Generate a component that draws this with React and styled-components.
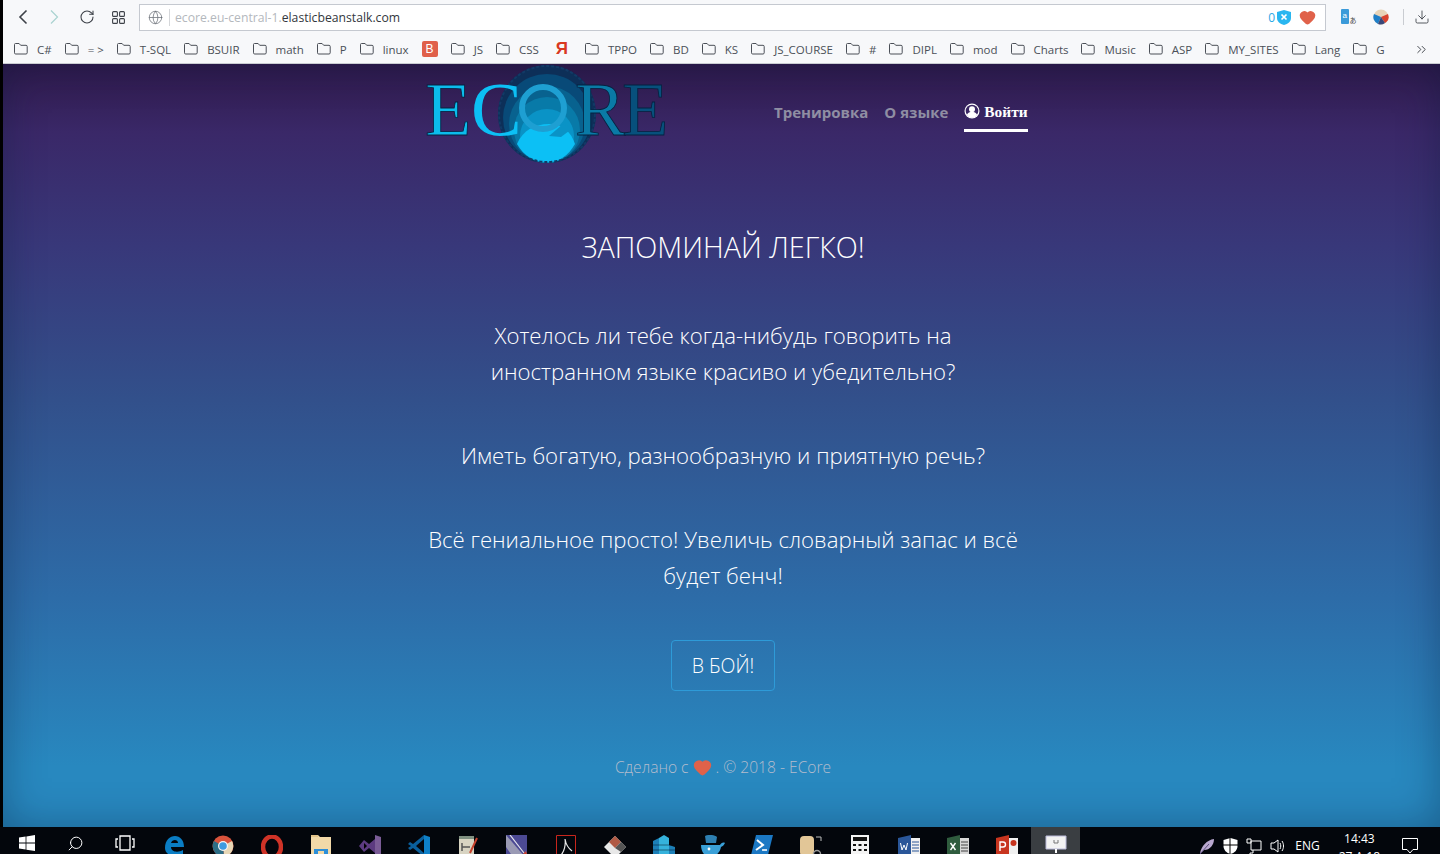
import React from 'react';
import styled, { createGlobalStyle } from 'styled-components';
import { RotateCw, Globe, Download, ChevronsRight, Search, Heart } from 'lucide-react';

const GlobalStyle = createGlobalStyle`
  html, body {
    margin: 0;
    padding: 0;
    height: 854px;
    overflow: hidden;
    background: #000;
  }
`;

const bookmarks = [
  'C#', '= >', 'T-SQL', 'BSUIR', 'math', 'P', 'linux', '@b', 'JS', 'CSS', '@y', 'TPPO', 'BD', 'KS',
  'JS_COURSE', '#', 'DIPL', 'mod', 'Charts', 'Music', 'ASP', 'MY_SITES', 'Lang', 'G',
];

const FolderIcon = () => (
  <svg width="14" height="12" viewBox="0 0 14 12" fill="none" stroke="#4a4f57" strokeWidth="1">
    <path d="M1.5 .5h3.6l1.6 1.8h5.3a1.2 1.2 0 0 1 1.2 1.2v6.3a1.2 1.2 0 0 1-1.2 1.2H1.7A1.2 1.2 0 0 1 .5 9.8V1.5a1 1 0 0 1 1-1z" />
  </svg>
);

const Logo = () => (
  <svg width="242" height="100" viewBox="0 0 242 100">
    <circle cx="122" cy="50" r="49" fill="#0d2f58" />
    <circle cx="122" cy="54" r="44" fill="#084a78" />
    <circle cx="122" cy="60" r="38" fill="#08628f" />
    <circle cx="122" cy="66" r="33" fill="#087aa8" />
    <circle cx="122" cy="72" r="27" fill="#0a93c6" />
    <path d="M92 80c6-14 18-20 32-20 14 0 22 8 26 20-7 12-16 18-28 18-13 0-23-6-30-18z" fill="#0cc0f5" />
    <circle cx="122" cy="50" r="48" fill="none" stroke="#123a66" strokeWidth="2" strokeDasharray="3 2" />
    <circle cx="118" cy="44" r="21" fill="none" stroke="#1e9fd2" strokeWidth="6" />
    <path d="M124 72l14-12 10 4-12 9z" fill="#0a93c6" />
    <g fontFamily="'Liberation Serif', serif" fontSize="76" stroke="#04213f" strokeWidth=".8">
      <text x="0" y="71" fill="#0cbcec">E</text>
      <text x="46" y="71" fill="#0cc0f5" stroke="none">C</text>
      <text x="150" y="71" fill="#0a7aa6">R</text>
      <text x="197" y="71" fill="#07507c">E</text>
    </g>
  </svg>
);

const taskIcons = [
  <svg key="win" width="16" height="16" viewBox="0 0 16 16" fill="#fff"><path d="M0 2.4 6.6 1.5v6H0zM7.4 1.4 16 0v7.5H7.4zM0 8.4h6.6v6L0 13.5zM7.4 8.4H16V16l-8.6-1.3z" /></svg>,
  <Search key="search" size={17} color="#fff" strokeWidth={1.4} style={{ transform: 'scaleX(-1)' }} />,
  <svg key="view" width="20" height="18" viewBox="0 0 20 18" fill="none" stroke="#fff" strokeWidth="1.3"><path d="M5 1h10v14H5zM3 4H1v8h2M17 4h2v8h-2" /></svg>,
  <svg key="edge" width="20" height="22" viewBox="0 0 20 22"><path d="M1 13C1 5 6 1 11 1c5 0 9 4 9 11H7c0 5 7 6 12 3v5c-7 3-18 1-18-7zM7 8h7c0-4-6-4-7 0z" fill="#0a7dc4" /></svg>,
  <svg key="chrome" width="22" height="22" viewBox="0 0 22 22"><circle cx="11" cy="11" r="10.5" fill="#d9533c" /><path d="M11 11 20 6a10.5 10.5 0 0 1-8 15.5z" fill="#e7d7b6" /><path d="M11 11 12 21.5A10.5 10.5 0 0 1 2 6z" fill="#2d6e86" /><circle cx="11" cy="11" r="5" fill="#f5f5f5" /><circle cx="11" cy="11" r="3.8" fill="#3d9be0" /></svg>,
  <svg key="opera" width="22" height="24" viewBox="0 0 22 24"><ellipse cx="11" cy="12" rx="9" ry="10.5" fill="none" stroke="#cf3327" strokeWidth="4.5" /></svg>,
  <svg key="files" width="20" height="22" viewBox="0 0 20 22"><path d="M0 0h7l2 2h11v20H0z" fill="#f2d9a8" /><path d="M0 0h7v2H0z" fill="#e3c48a" /><path d="M3 14h14v8H3z" fill="#2d8fd8" /><path d="M7 16h6v6H7z" fill="#f2d9a8" /></svg>,
  <svg key="vs" width="22" height="22" viewBox="0 0 22 22"><path d="M16 0l6 2v18l-6 2z" fill="#7a5c96" /><path d="M16 4v14l-6-5-5 4-5-6 5-6 5 4z" fill="#5c3b80" /><path d="M5 8v6l3-3z" fill="#000" /></svg>,
  <svg key="code" width="22" height="22" viewBox="0 0 22 22"><path d="M16 0l6 2v18l-6 2z" fill="#0e80c8" /><path d="M16 4 8 11l8 7v4L5 13l-3 2-2-2 3-2-3-2 2-2 3 2L16 0z" fill="#0a5f9c" /></svg>,
  <svg key="note" width="22" height="22" viewBox="0 0 22 22"><path d="M2 1h15v21H2z" fill="#d8d4c2" /><path d="M2 1h15v3H2z" fill="#7f8f80" /><path d="M5 12h8M5 8v8" stroke="#555" strokeWidth="1.5" /><path d="M13 18 20 3" stroke="#c8432e" strokeWidth="2" /></svg>,
  <svg key="vpn" width="24" height="22" viewBox="0 0 24 22"><path d="M1 0h21v22H1z" fill="#4c4a94" /><path d="M1 0 20 22H8L1 12z" fill="#9a9ab4" /><path d="M5 0l14 18" stroke="#e8e8ee" strokeWidth="1.2" /><path d="M15 22l6-6 2 6z" fill="#c8432e" /></svg>,
  <svg key="pdf" width="20" height="22" viewBox="0 0 20 22" fill="none"><path d="M.5.5h19v22H.5z" stroke="#c8251c" /><path d="M5 20c3-3 5-10 4-16 1 6 3 9 7 12" stroke="#e8e8e8" strokeWidth="1.2" /></svg>,
  <svg key="git" width="24" height="24" viewBox="0 0 24 24"><path d="M12 1 23 12 12 23 1 12z" fill="#e8e8e8" /><path d="M12 1l6 6-6 6-6-6z" fill="#b05a45" /><path d="M12 13l6-6 5 5-5 5z" fill="#555" /></svg>,
  <svg key="stack" width="22" height="24" viewBox="0 0 22 24"><path d="M0 6l6-3v21H0z" fill="#1c7fb8" /><path d="M6 3l5-3 5 3v21H6z" fill="#35b2dc" /><path d="M16 10l6 2v12h-6z" fill="#1c7fb8" /><path d="M0 10h22M0 15h22M0 20h22" stroke="#05121d" strokeWidth=".8" opacity=".6" /></svg>,
  <svg key="docker" width="24" height="22" viewBox="0 0 24 22"><path d="M0 10h19c1-2 3-3 5-2-1 2-2 3-4 4-1 6-6 10-11 10C4 22 0 17 0 10z" fill="#3aa0d8" /><path d="M4 1c4-2 10-1 12 1l-1 6H5z" fill="#2d7fb2" /><circle cx="8" cy="14" r="1.4" fill="#fff" /></svg>,
  <svg key="shell" width="22" height="20" viewBox="0 0 22 20"><path d="M5 0h17l-5 20H0z" fill="#1b78c4" /><path d="M6 5l6 5-7 5" stroke="#fff" strokeWidth="2" fill="none" /><path d="M11 15h5" stroke="#fff" strokeWidth="1.6" /></svg>,
  <svg key="sql" width="24" height="24" viewBox="0 0 24 24"><rect x="1" y="1" width="14" height="20" rx="4" fill="#e2c697" /><path d="M17 2h5v4" stroke="#bbb" fill="none" /><circle cx="18" cy="19" r="3.5" fill="none" stroke="#999" strokeWidth="1.4" /></svg>,
  <svg key="calc" width="18" height="22" viewBox="0 0 18 22"><path d="M0 0h18v22H0z" fill="#f4f4f4" /><path d="M2 2h14v4H2z" fill="#111" /><path d="M2 9h3v2H2zM7.500 9h3v2h-3zM13 9h3v2h-3zM2 14h3v2H2zM7.500 14h3v2h-3zM13 14h3v2h-3zM2 19h3v2H2zM7.500 19h3v2h-3zM13 19h3v2h-3z" fill="#111" /></svg>,
  <svg key="word" width="22" height="22" viewBox="0 0 22 22"><path d="M0 3 13 0v22L0 19z" fill="#2a5699" /><path d="M13 3h9v17h-9z" fill="#f0f0f0" /><path d="M14 7h7M14 10h7M14 13h7M14 16h7" stroke="#2a5699" /><path d="M2.500 8l1.500 7 2-5 2 5 1.500-7" stroke="#fff" fill="none" /></svg>,
  <svg key="excel" width="22" height="22" viewBox="0 0 22 22"><path d="M0 3 13 0v22L0 19z" fill="#2f5c3e" /><path d="M13 3h9v17h-9z" fill="#d8d8d8" /><path d="M14 7h7M14 10h7M14 13h7M14 16h7" stroke="#444" /><path d="M3.500 8l5 7M8.500 8l-5 7" stroke="#fff" strokeWidth="1.4" /></svg>,
  <svg key="ppt" width="22" height="22" viewBox="0 0 22 22"><path d="M0 3 13 0v22L0 19z" fill="#c8351f" /><path d="M13 3h9v17h-9z" fill="#f0f0f0" /><circle cx="17.500" cy="8" r="3" fill="#c8351f" /><path d="M4 16V7h3a2.500 2.500 0 0 1 0 5H4" stroke="#fff" strokeWidth="1.4" fill="none" /></svg>,
  <svg key="screen" width="22" height="20" viewBox="0 0 22 20" fill="none"><path d="M1 1h20v13H1z" fill="#f2f2f2" stroke="#b9b9d8" /><path d="M9 5v3h4V5" stroke="#777" /><path d="M11 14v4" stroke="#fff" strokeWidth="2" /></svg>,
];

export default function App() {
  return (
    <>
      <GlobalStyle />
      <Screen>
        <Browser>
          <Toolbar>
            <NavIcons>
              <svg width="12" height="16" viewBox="0 0 12 16" fill="none" stroke="#3d4148" strokeWidth="1.6"><path d="M9.500 1.500 3 8l6.500 6.500" /></svg>
              <svg width="12" height="16" viewBox="0 0 12 16" fill="none" stroke="#a9d3d0" strokeWidth="1.2"><path d="M3 1.500 9.500 8 3 14.500" /></svg>
              <RotateCw size={16} color="#3d4148" strokeWidth={1.6} />
              <GridIcon width="13" height="13" viewBox="0 0 13 13" fill="none" stroke="#3d4148" strokeWidth="1.1"><rect x=".6" y=".6" width="4.800" height="4.800" rx="1" /><rect x="7.600" y=".6" width="4.800" height="4.800" rx="1" /><rect x=".6" y="7.600" width="4.800" height="4.800" rx="1" /><rect x="7.600" y="7.600" width="4.800" height="4.800" rx="1" /></GridIcon>
            </NavIcons>
            <AddressBar>
              <Globe size={15} color="#6b7078" strokeWidth={1.2} />
              <AddressDivider />
              <Url><UrlMuted>ecore.eu-central-1.</UrlMuted>elasticbeanstalk.com</Url>
              <ShieldCount>0</ShieldCount>
              <ShieldIcon width="14" height="15" viewBox="0 0 14 15"><path d="M7 0l7 2v6c0 3.500-3 6-7 7-4-1-7-3.500-7-7V2z" fill="#29b6f0" /><path d="M4.500 4.500l5 5M9.500 4.500l-5 5" stroke="#fff" strokeWidth="1.700" /></ShieldIcon>
              <Heart size={17} color="#e0624a" fill="#e0624a" />
            </AddressBar>
            <Extensions>
              <svg width="16" height="16" viewBox="0 0 16 16"><rect width="8" height="15" rx="1" fill="#3a9ad9" /><text x="1.500" y="9" fontFamily="'Liberation Sans', sans-serif" fontSize="8" fill="#fff">a</text><text x="8.500" y="14" fontFamily="'Noto Sans CJK JP', sans-serif" fontSize="7" fill="#444">あ</text></svg>
              <svg width="16" height="16" viewBox="0 0 16 16"><circle cx="8" cy="8" r="7.500" fill="#e8d4b8" /><path d="M8 8l7-3a7.500 7.500 0 0 1-3 9z" fill="#d8422e" /><path d="M8 8l-3 7A7.500 7.500 0 0 1 1 5z" fill="#1f7fc8" /><path d="M8 8l4 6a7.500 7.500 0 0 1-7 1z" fill="#38487a" /></svg>
              <ExtDivider />
              <Download size={16} color="#3d4148" strokeWidth={1.3} />
            </Extensions>
          </Toolbar>
          <BookmarkBar>
            {bookmarks.map((name) => {
              if (name === '@b') return <BadgeB key={name}>B</BadgeB>;
              if (name === '@y') return <YandexMark key={name}>Я</YandexMark>;
              return (
                <Bookmark key={name}>
                  <FolderIcon />
                  <span>{name}</span>
                </Bookmark>
              );
            })}
            <More><ChevronsRight size={15} color="#3d4148" strokeWidth={1.5} /></More>
          </BookmarkBar>
        </Browser>
        <Page>
          <Header>
            <Logo />
            <Nav>
              <NavLink>Тренировка</NavLink>
              <NavLink>О языке</NavLink>
              <LoginLink>
                <svg width="16" height="16" viewBox="0 0 16 16"><circle cx="8" cy="8" r="7.500" fill="#fff" /><circle cx="8" cy="8" r="6.300" fill="#3a2764" /><circle cx="8" cy="6.300" r="3" fill="#fff" /><path d="M2.800 12c1-2.500 3-3 5.200-3s4.200.5 5.200 3a6.300 6.300 0 0 1-10.400 0z" fill="#fff" /></svg>
                Войти
              </LoginLink>
            </Nav>
          </Header>
          <Main>
            <Title>ЗАПОМИНАЙ ЛЕГКО!</Title>
            <Lead>Хотелось ли тебе когда-нибудь говорить на<br />иностранном языке красиво и убедительно?</Lead>
            <Lead>Иметь богатую, разнообразную и приятную речь?</Lead>
            <Lead>Всё гениальное просто! Увеличь словарный запас и всё<br />будет бенч!</Lead>
            <FightButton>В БОЙ!</FightButton>
            <Footer>Сделано с <Heart size={19} color="#e0624a" fill="#e0624a" /> . © 2018 - ECore</Footer>
          </Main>
        </Page>
      </Screen>
      <Taskbar>
        <TaskIcons>
          {taskIcons.map((icon, i) => (
            <TaskCell key={icon.key} $active={i === taskIcons.length - 1}>{icon}</TaskCell>
          ))}
        </TaskIcons>
        <Tray>
          <svg width="16" height="16" viewBox="0 0 16 16"><path d="M1 16C2 8 8 2 15 1c0 6-4 11-10 11z" fill="#b9a8d0" /><path d="M1 16 10 6" stroke="#5a4a78" /></svg>
          <svg width="15" height="16" viewBox="0 0 15 16"><path d="M7.500 0l7 2v6c0 4-3 7-7 8-4-1-7-4-7-8V2z" fill="#fff" /><path d="M7 0v16M0 7h15" stroke="#000" /></svg>
          <svg width="16" height="16" viewBox="0 0 16 16" fill="none" stroke="#fff"><path d="M1 1h4v4H1zM5 3h10v9H5zM7 12v3H4v1" /></svg>
          <svg width="16" height="16" viewBox="0 0 16 16" fill="none" stroke="#fff"><path d="M1 5h3l4-3v12l-4-3H1zM10 5c1 2 1 4 0 6M12 3c2 3 2 7 0 10" /></svg>
          <TrayLang>ENG</TrayLang>
          <Clock>14:43<br />27 А 18</Clock>
          <svg width="16" height="16" viewBox="0 0 16 16" fill="none" stroke="#fff"><path d="M.5.500h15v11H11L8 15l-3-3.500H.5z" /></svg>
        </Tray>
      </Taskbar>
    </>
  );
}

const Screen = styled.div`
  height: 827px;
  border-left: 3px solid #000;
  display: flex;
  flex-direction: column;
`;

const Browser = styled.div`
  height: 64px;
  flex: none;
  box-sizing: border-box;
  background: #f7f8fa;
  border-bottom: 1px solid #c9ccd1;
  font-family: 'Open Sans', sans-serif;
`;

const Toolbar = styled.div`
  height: 35px;
  display: flex;
  align-items: center;
  padding-bottom: 1px;
  box-sizing: border-box;
`;

const NavIcons = styled.div`
  width: 136px;
  flex: none;
  display: flex;
  align-items: center;
  gap: 19px;
  padding-left: 14px;
  box-sizing: border-box;
`;

const GridIcon = styled.svg`
  margin-left: -2px;
`;

const AddressBar = styled.div`
  width: 1187px;
  height: 27px;
  flex: none;
  box-sizing: border-box;
  background: #fff;
  border: 1px solid #c5c9d0;
  display: flex;
  align-items: center;
  padding: 0 9px 0 8px;
`;

const AddressDivider = styled.span`
  width: 1px;
  height: 17px;
  background: #d5d7da;
  margin: 0 5px 0 6px;
`;

const Url = styled.div`
  flex: 1;
  font-size: 12.2px;
  color: #33373d;
`;

const UrlMuted = styled.span`
  color: #b4b8bd;
`;

const ShieldCount = styled.span`
  font-size: 12px;
  color: #2aa8e6;
  margin-right: 2px;
`;

const ShieldIcon = styled.svg`
  margin-right: 8px;
`;

const Extensions = styled.div`
  flex: 1;
  display: flex;
  align-items: center;
  gap: 16px;
  padding-left: 15px;
`;

const ExtDivider = styled.span`
  width: 1px;
  height: 16px;
  background: #c9ccd1;
  margin: 0 -6px 0 -2px;
`;

const BookmarkBar = styled.div`
  height: 28px;
  display: flex;
  align-items: center;
  gap: 13px;
  padding-left: 11px;
  position: relative;
`;

const Bookmark = styled.div`
  display: flex;
  align-items: center;
  gap: 9px;
  font-size: 11.5px;
  color: #4b5058;
  white-space: nowrap;
`;

const BadgeB = styled.span`
  width: 16px;
  height: 16px;
  border-radius: 2px;
  background: #e0604a;
  color: #fff;
  font: 12px/16px 'Liberation Sans', sans-serif;
  text-align: center;
`;

const YandexMark = styled.span`
  width: 16px;
  margin: 0 2px;
  font: bold 17px/18px 'Liberation Sans', sans-serif;
  color: #d9391f;
  text-align: center;
`;

const More = styled.span`
  position: absolute;
  right: 11px;
  top: 7px;
  line-height: 0;
`;

const Page = styled.div`
  flex: 1;
  font-family: 'Open Sans', sans-serif;
  background: linear-gradient(180deg, #2f1a4c 0%, #3a2868 9%, #38387a 24%, #32508b 44%, #2d6ca8 70%, #2888bf 92%, #2888bf 100%);
  box-shadow: inset 0 0 40px rgba(0, 20, 50, 0.35);
`;

const Header = styled.header`
  height: 100px;
  display: flex;
  padding-left: 422px;
`;

const Nav = styled.nav`
  display: flex;
  gap: 16px;
  margin-left: 107px;
  height: 68px;
  align-items: flex-end;
`;

const NavLink = styled.a`
  height: 38px;
  font-size: 15px;
  font-weight: 700;
  line-height: 36px;
  color: #8f8ea3;
`;

const LoginLink = styled.a`
  display: flex;
  align-items: flex-start;
  gap: 4px;
  padding-top: 4px;
  height: 35px;
  font: 700 15.4px/36px 'Liberation Serif', serif;
  color: #fff;
  border-bottom: 3px solid #fff;

  svg {
    margin-top: 9px;
  }
`;

const Main = styled.main`
  display: flex;
  flex-direction: column;
  align-items: center;
  padding-left: 3px;
  color: #fff;
  font-weight: 300;
`;

const Title = styled.h1`
  margin: 63px 0 0;
  font-size: 28.8px;
  font-weight: 300;
  line-height: 40px;
`;

const Lead = styled.p`
  margin: 51px 0 0;
  font-size: 22.2px;
  line-height: 36px;
  text-align: center;
  white-space: nowrap;

  & + & {
    margin-top: 48px;
  }
`;

const FightButton = styled.button`
  width: 104px;
  height: 51px;
  margin-top: 46px;
  box-sizing: border-box;
  border: 1px solid #2e9bd8;
  border-radius: 4px;
  background: transparent;
  color: #fff;
  font: 300 19.5px 'Open Sans', sans-serif;
`;

const Footer = styled.footer`
  margin-top: 64px;
  display: flex;
  align-items: center;
  gap: 4px;
  font-size: 15.6px;
  line-height: 24px;
  color: #b4bccd;
`;

const Taskbar = styled.div`
  height: 27px;
  background: #03060c;
  overflow: hidden;
  display: flex;
  justify-content: space-between;
  color: #fff;
  font-family: 'Open Sans', sans-serif;
`;

const TaskIcons = styled.div`
  display: flex;
  padding-left: 2px;
`;

const TaskCell = styled.div`
  width: 49px;
  height: 27px;
  display: flex;
  justify-content: center;
  padding-top: 8px;
  box-sizing: border-box;
  background: ${({ $active }) => ($active ? '#3a3e42' : 'transparent')};
`;

const Tray = styled.div`
  display: flex;
  gap: 8px;
  padding: 11px 22px 0 0;
  align-items: flex-start;
`;

const TrayLang = styled.span`
  font-size: 12px;
  line-height: 16px;
  margin-left: 1px;
`;

const Clock = styled.span`
  font-size: 12px;
  line-height: 18px;
  text-align: center;
  margin: -8px 14px 0 11px;
`;
